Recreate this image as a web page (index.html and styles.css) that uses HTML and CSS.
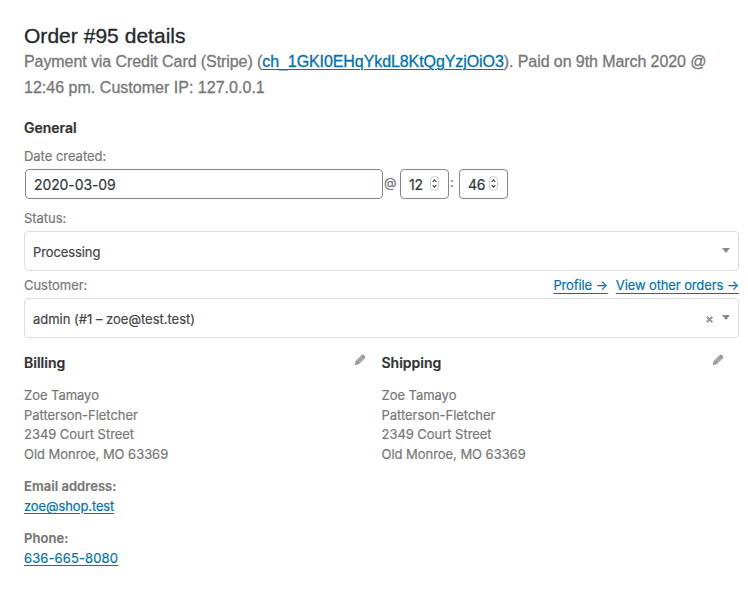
FILE: index.html
```html
<!DOCTYPE html>
<html lang="en">
<head>
<meta charset="utf-8">
<title>Order #95 details</title>
<link rel="stylesheet" href="styles.css">
</head>
<body>
<main class="order">
  <h1 class="order-title">Order #95 details</h1>
  <p class="order-meta">Payment via Credit Card (Stripe) (<a href="#">ch_1GKI0EHqYkdL8KtQgYzjOiO3</a>). Paid on 9th March 2020 @<br><span class="meta-second">12:46 pm. Customer IP: 127.0.0.1</span></p>

  <section class="general">
    <h2 class="heading heading-general">General</h2>
    <div class="label">Date created:</div>
    <div class="date-row">
      <div class="input input-date">2020-03-09</div>
      <span class="at">@</span>
      <div class="input input-time"><span>12</span><svg class="stepper" viewBox="0 0 9 15"><rect x=".5" y=".5" width="8" height="14" rx="4"/><path d="M2.7 5.8 4.5 3.8 6.3 5.8M2.7 9.2 4.5 11.2 6.3 9.2"/></svg></div>
      <span class="colon">:</span>
      <div class="input input-time"><span>46</span><svg class="stepper" viewBox="0 0 9 15"><rect x=".5" y=".5" width="8" height="14" rx="4"/><path d="M2.7 5.8 4.5 3.8 6.3 5.8M2.7 9.2 4.5 11.2 6.3 9.2"/></svg></div>
    </div>
    <div class="label label-status">Status:</div>
    <div class="select"><span class="value-status">Processing</span><svg class="caret" viewBox="0 0 8 5"><path d="M0 0H8L4 5Z"/></svg></div>
    <div class="customer-row">
      <span class="label">Customer:</span>
      <span class="links"><a class="profile" href="#">Profile →</a><a class="orders" href="#">View other orders →</a></span>
    </div>
    <div class="select"><span class="value-customer">admin (#1 – zoe@test.test)</span><svg class="clear" viewBox="0 0 7 7"><path d="M.7 .7 6.3 6.3M6.3 .7 .7 6.3"/></svg><svg class="caret" viewBox="0 0 8 5"><path d="M0 0H8L4 5Z"/></svg></div>
  </section>

  <div class="addresses">
    <section class="address">
      <h2 class="heading heading-billing">Billing<svg class="pencil" viewBox="0 0 12 12"><path d="M.7 11.2 1.6 7 7.7 1Q9.2.1 10.6 1.4 11.8 2.8 10.9 4.2L4.8 10.2Z"/><path class="groove" d="M3 7.2 8 2.5M4.6 8.7 9.5 4"/></svg></h2>
      <address>Zoe Tamayo<br>Patterson-Fletcher<br>2349 Court Street<br>Old Monroe, MO 63369</address>
      <p class="contact"><strong>Email address:</strong><br><a class="email" href="#">zoe@shop.test</a></p>
      <p class="contact"><strong>Phone:</strong><br><a class="phone" href="#">636-665-8080</a></p>
    </section>
    <section class="address">
      <h2 class="heading heading-shipping">Shipping<svg class="pencil" viewBox="0 0 12 12"><path d="M.7 11.2 1.6 7 7.7 1Q9.2.1 10.6 1.4 11.8 2.8 10.9 4.2L4.8 10.2Z"/><path class="groove" d="M3 7.2 8 2.5M4.6 8.7 9.5 4"/></svg></h2>
      <address>Zoe Tamayo<br>Patterson-Fletcher<br>2349 Court Street<br>Old Monroe, MO 63369</address>
    </section>
  </div>
</main>
</body>
</html>
```
FILE: styles.css
```css
* { box-sizing: border-box; }
body { margin: 0; background: #fff; color: #777; font: 13px/19.6px Inter, sans-serif; -webkit-text-stroke: .2px; letter-spacing: -.03px; }
a { color: #0073aa; text-decoration: underline; text-underline-offset: 2px; text-decoration-thickness: 1px; }
.order { padding: 22px 9px 0 24px; }
.order-title { margin: 0; font: 400 21px/27px "Liberation Sans", Arial, sans-serif; color: #23282d; letter-spacing: .03px; -webkit-text-stroke: .3px; }
.order-meta { margin: 0; font: 16px/26px "Liberation Sans", Arial, sans-serif; letter-spacing: -.08px; -webkit-text-stroke: .3px; white-space: nowrap; }
.meta-second { letter-spacing: .02px; }
.heading { margin: 0; font-size: 14px; line-height: 20px; font-weight: 600; color: #333; letter-spacing: 0; }
.heading-general { margin-top: 17px; }
.label { line-height: 20px; }
.general > .label { margin-top: 8px; }
.date-row { display: flex; margin: 3px 0 0 1px; height: 30px; }
.input { height: 30px; border: 1px solid #7e8993; border-radius: 4px; color: #32373c; font-size: 14px; line-height: 30px; padding-left: 8px; letter-spacing: -.1px; }
.input-date { width: 358px; }
.input-time { width: 49px; display: flex; }
.input-time span { width: 20px; letter-spacing: -.2px; }
.stepper { width: 9px; height: 15px; margin: 6px 0 0 1px; }
.stepper rect { fill: #fff; stroke: #ccc; }
.stepper path { fill: none; stroke: #444; stroke-width: 1.2; }
.at { width: 17px; padding-left: 1px; line-height: 27px; }
.colon { width: 10px; padding-left: 1px; line-height: 26px; }
.general > .label-status { margin-top: 9px; }
.select { height: 40px; margin-top: 3px; padding: 0 8px; display: flex; align-items: center; border: 1px solid #ddd; border-radius: 4px; color: #444; line-height: 40px; }
.select span { padding-top: 1px; margin-right: auto; }
.value-status { letter-spacing: -.1px; }
.value-customer { letter-spacing: -.01px; }
.caret { width: 8px; height: 5px; fill: #888; margin-bottom: 2px; }
.clear { width: 7px; height: 7px; margin: 3px 9px 0 0; stroke: #999; stroke-width: 2; }
.customer-row { display: flex; justify-content: space-between; height: 24px; padding-top: 4px; }
.links { display: flex; gap: 8px; line-height: 20px; letter-spacing: -.12px; }
.links a { text-underline-offset: 3px; }
.addresses { display: grid; grid-template-columns: 357.5px 357.5px; margin-top: 15px; }
.address .heading { display: flex; justify-content: space-between; }
.pencil { width: 12px; height: 12px; margin: 1px 15.5px 0 0; fill: #999; }
.pencil .groove { fill: none; stroke: #ccc; stroke-width: .7; }
address { margin-top: 13px; font-style: normal; letter-spacing: -.04px; }
.contact { margin: 12.8px 0 0; }
.email { letter-spacing: -.12px; }
.phone { letter-spacing: .12px; }
strong { font-weight: 600; letter-spacing: .05px; }
```
